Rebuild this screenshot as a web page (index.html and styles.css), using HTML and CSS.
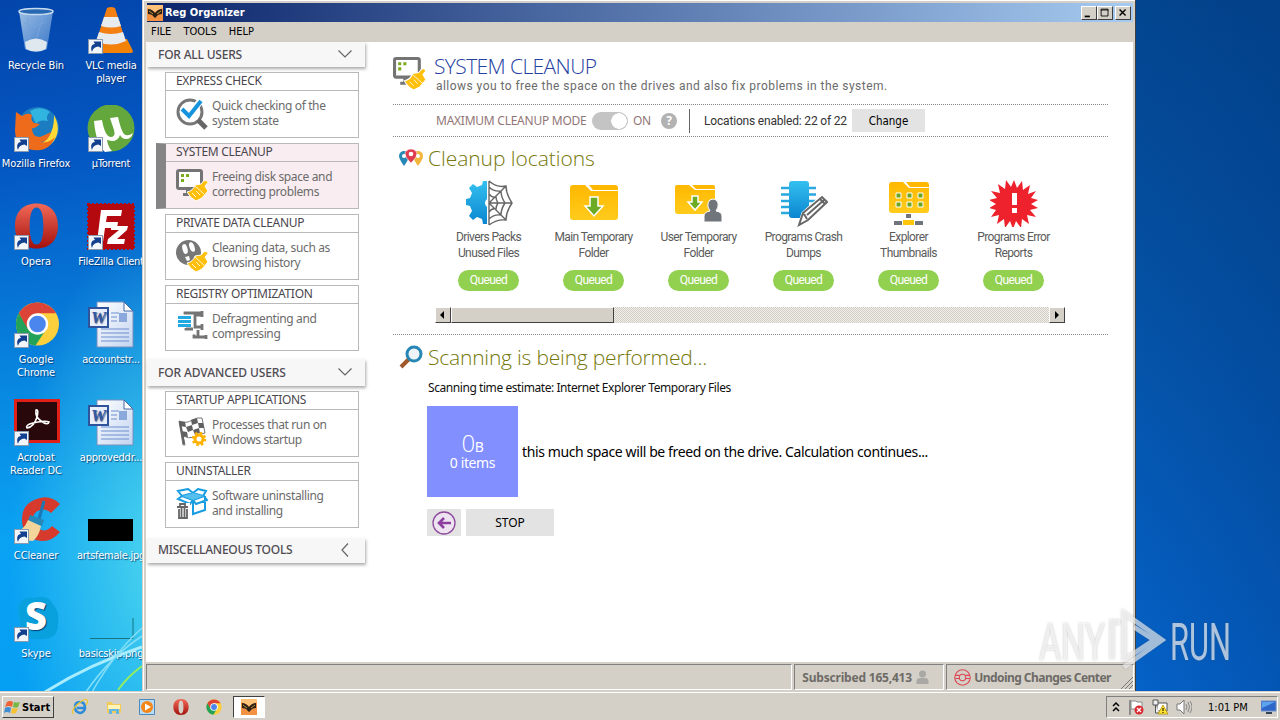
FILE: index.html
```html
<!DOCTYPE html>
<html>
<head>
    <meta charset="utf-8">
    <title>Reg Organizer</title>
    <link rel="stylesheet" href="styles.css">
</head>
<body>
    <svg class="defs" width="0" height="0">
        <defs>
            <linearGradient id="blue" x1="0" y1="0" x2="0" y2="1"><stop offset="0" stop-color="#35c0f0"/><stop offset="1" stop-color="#0a86d0"/></linearGradient>
            <linearGradient id="gold" x1="0" y1="0" x2="0" y2="1"><stop offset="0" stop-color="#ffb800"/><stop offset="1" stop-color="#ffcb1c"/></linearGradient>
            <linearGradient id="opera" x1="0" y1="0" x2="0" y2="1"><stop offset="0" stop-color="#f26a58"/><stop offset="1" stop-color="#a3100c"/></linearGradient>
            <linearGradient id="glass" x1="0" y1="0" x2="1" y2="1"><stop offset="0" stop-color="#b9d4ee" stop-opacity=".85"/><stop offset="1" stop-color="#4c86cf" stop-opacity=".75"/></linearGradient>
            <linearGradient id="doc" x1="0" y1="0" x2="1" y2="1"><stop offset="0" stop-color="#fff"/><stop offset="1" stop-color="#c3d4f0"/></linearGradient>
        </defs>
        <symbol id="shortcut" viewBox="0 0 15 15"><rect x=".5" y=".5" width="14" height="14" fill="#f2f6fb" stroke="#8a9bb0"/><path d="M4 13C2 8 4 5 7 5L5.500 2.500H13V9L10.500 7.500C7 8 5 9 4 13Z" fill="#123f8e"/></symbol>
        <symbol id="monitor" viewBox="0 0 32 32"><rect x="1.500" y="1.500" width="24" height="18" rx="1.500" fill="#fff" stroke="#747474" stroke-width="3"/><path d="M10 20h8v4h3v3H7v-3h3z" fill="#747474"/><path d="M5 5h3v3H5zM10 5h3v3h-3zM5 10h3v3H5z" fill="#7cab1d"/><use href="#broom"/></symbol>
        <symbol id="broom" viewBox="0 0 32 32"><path d="M25 15l2.500-3q3-2 4.500 1.500L29 17l3 5-6 7-6 3q-6-3-9-9 6-1 8-7z" fill="#ffbf0b" stroke="#fff" stroke-width="1"/><path d="M19 17l9 8M16 24l4 4M20 22l4 4" stroke="#fff" stroke-width=".8"/></symbol>
        <symbol id="chrome" viewBox="0 0 46 46"><circle cx="23" cy="23" r="22" fill="#fccf3c"/><path d="M4 12A22 22 0 0 0 21 45L32 28 23 23 14 28z" fill="#23a35a"/><path d="M23 12h19a22 22 0 0 0-38 0l9 16z" fill="#db4437"/><circle cx="23" cy="23" r="11" fill="#fff"/><circle cx="23" cy="23" r="8.500" fill="#4a86ee"/></symbol>
        <symbol id="operaO" viewBox="0 0 46 46"><path fill-rule="evenodd" d="M23 0C9 0 1 9 1 23s8 23 22 23 22-9 22-23S37 0 23 0zm0 4c5 0 7 8 7 19s-2 19-7 19-7-8-7-19 2-19 7-19z" fill="url(#opera)"/></symbol>
        <symbol id="word" viewBox="0 0 48 48"><path d="M10 1h27l9 9v36H10z" fill="url(#doc)" stroke="#7790bd"/><path d="M37 1v9h9z" fill="#fff" stroke="#4667a5"/><path d="M24 12h8M24 16h6M24 20h6M14 28h28M14 32h28M14 36h28M14 40h28" stroke="#6d8fd0"/><rect x="32" y="12" width="8" height="9" fill="#8ba8dc"/><rect x="2" y="7" width="19" height="19" fill="#e9effa" stroke="#2f549c" stroke-width="2"/><text x="11.500" y="22" text-anchor="middle" font-family="Liberation Serif, serif" font-size="17" font-style="italic" font-weight="bold" fill="#3158a5">W</text></symbol>
        <symbol id="reg" viewBox="0 0 16 16"><rect width="16" height="16" fill="#f39243"/><path d="M0 0h16v3L8 7 0 3z" fill="#ffc278"/><path d="M1 4q4 0 7 4 3-4 7-4v5q-2 0-4 1l-3 3-3-3Q3 9 1 9z" fill="#282017"/><path d="M2 6l4 3M14 6l-4 3" stroke="#c49338"/></symbol>
        <symbol id="down" viewBox="0 0 16 10"><path d="M1.500 1.500L8 8l6.500-6.500" fill="none" stroke="#666" stroke-width="1.200"/></symbol>
    </svg>

    <div class="desktop">
        <div class="icons">
            <div class="icon">
                <svg viewBox="0 0 48 48"><path d="M7 4h34l-6 38q-11 6-22 0z" fill="url(#glass)"/><ellipse cx="24" cy="4.500" rx="17" ry="3" fill="#2867b2" stroke="#c7dbef" stroke-width="1.500"/><path d="M13 35q11-7 22 0l-1 7q-10 5-20 0z" fill="#dfe8ee"/><path d="M15 10l3 23M31 10l-6 20M12 16l10 4 12-5" stroke="#76a5dc" fill="none"/></svg>
                <span>Recycle Bin</span>
            </div>
            <div class="icon">
                <svg viewBox="0 0 48 48"><path d="M8 32h32l6 12q0 2-2 2H4q-2 0-2-2z" fill="#f28308"/><path d="M20 1q4-2 8 0l11 34q-15 9-30 0z" fill="#f47f12"/><path d="M17 10h14l3 9q-10 3-20 0zM12 25q12 4 24 0l3 9q-15 7-30 0z" fill="#e9ecef"/></svg>
                <svg class="shortcut"><use href="#shortcut"/></svg>
                <span>VLC media<br>player</span>
            </div>
            <div class="icon">
                <svg viewBox="0 0 48 48"><circle cx="26" cy="23" r="21" fill="#1b7cc2"/><path d="M18 6q10-6 20 1-5 4-2 9-9-2-12 3z" fill="#32b4e0"/><path d="M42 10q9 17-3 29-9 8-21 5 25-7 24-34z" fill="#ffd936"/><path d="M4 7l6 4q6-4 10-1-2 5 2 8l6 1q-5 5-8 4 0 9 8 9 5-2 11-5-3 10-11 10 9 2 15-5-6 15-21 13Q3 43 3 25z" fill="#ee6b1b"/></svg>
                <svg class="shortcut"><use href="#shortcut"/></svg>
                <span>Mozilla Firefox</span>
            </div>
            <div class="icon">
                <svg viewBox="0 0 48 48"><circle cx="24" cy="23" r="23.500" fill="#64a83d"/><path d="M7 16l8-1q3 17 9 17 5 0 3-7l-4-12 8-1q4 18 8 18 3 1 7-2-2 6-7 6-4 0-6-4-2 6-8 6l-5-1q1 7 5 11l-7 1Q9 39 7 16z" fill="#fff"/></svg>
                <svg class="shortcut"><use href="#shortcut"/></svg>
                <span>µTorrent</span>
            </div>
            <div class="icon">
                <svg viewBox="0 0 48 48"><use href="#operaO" x="2" width="45" height="46"/></svg>
                <svg class="shortcut"><use href="#shortcut"/></svg>
                <span>Opera</span>
            </div>
            <div class="icon">
                <svg viewBox="0 0 48 48"><rect x="1" y="1" width="46" height="45" fill="#b4090f" stroke="#b4090f" stroke-width="2" stroke-dasharray="2 2"/><path d="M14 7h21l-1 6H20l-1 6h12l-1 6H18l-2 14h-6z" fill="#fff"/><path d="M24 23h17l-1 4-10 9h8l-1 5H20l1-5 11-9h-8z" fill="#fff"/></svg>
                <svg class="shortcut"><use href="#shortcut"/></svg>
                <span>FileZilla Client</span>
            </div>
            <div class="icon">
                <svg viewBox="0 0 48 48"><use href="#chrome" x="3" width="45" height="46"/></svg>
                <svg class="shortcut"><use href="#shortcut"/></svg>
                <span>Google<br>Chrome</span>
            </div>
            <div class="icon">
                <svg><use href="#word"/></svg>
                <span>accountstr...</span>
            </div>
            <div class="icon">
                <svg viewBox="0 0 48 48"><rect x="3.500" y="1.500" width="43" height="41" fill="#28080a" stroke="#e02018" stroke-width="3"/><path d="M24 11q3-1 1 7-3 10-10 11-2-3 6-5 12-3 16-1-1 4-8-1-6-4-5-11z" fill="none" stroke="#fff" stroke-width="1.600"/></svg>
                <svg class="shortcut"><use href="#shortcut"/></svg>
                <span>Acrobat<br>Reader DC</span>
            </div>
            <div class="icon">
                <svg><use href="#word"/></svg>
                <span>approveddr...</span>
            </div>
            <div class="icon">
                <svg viewBox="0 0 48 48"><path d="M48 7Q37-4 22 3 9 9 10 24t14 19q14 4 24-8l-8-6q-6 7-13 3-6-3-6-10t7-9q6-2 11 3z" fill="#d63a2c"/><path d="M32 4l-5 18" stroke="#1d77b5" stroke-width="3"/><path d="M18 18l14 5-2 6-14-5z" fill="#2687b9"/><path d="M16 23l13 6q-2 10-8 15Q9 44 3 36q9-3 13-13z" fill="#f3d49a"/></svg>
                <svg class="shortcut"><use href="#shortcut"/></svg>
                <span>CCleaner</span>
            </div>
            <div class="icon">
                <svg viewBox="0 0 48 48"><rect x="1" y="22" width="45" height="22"/></svg>
                <span>artsfemale.jpg</span>
            </div>
            <div class="icon">
                <svg viewBox="0 0 48 48"><path d="M6 14Q8 1 23 3q12-4 17 5 8 8 6 20 0 17-16 16Q15 46 9 35z" fill="#08a0dd"/><text x="24" y="35" text-anchor="middle" font-family="Open Sans, sans-serif" font-size="38" font-weight="800" fill="#fff">S</text></svg>
                <svg class="shortcut"><use href="#shortcut"/></svg>
                <span>Skype</span>
            </div>
            <div class="icon">
                <svg viewBox="0 0 48 48"><path d="M3 43.500h43V23" fill="none" stroke="#15747f"/></svg>
                <span>basicskip.png</span>
            </div>
        </div>
        <svg class="rays" viewBox="0 0 142 160"><path d="M45 160Q90 132 142 115" fill="none" stroke="#a8ecff" stroke-width="3"/><path d="M86 160Q110 125 142 104M92 160Q115 120 142 96" fill="none" stroke="#83def6" stroke-width="1.500"/><path d="M118 158Q127 145 142 134" fill="none" stroke="#92ec62" stroke-width="2"/></svg>
    </div>

    <div class="window">
        <div class="titlebar">
            <svg class="app-icon"><use href="#reg"/></svg>
            <b>Reg Organizer</b>
            <div class="controls">
                <svg viewBox="0 0 16 14"><path d="M3 10h6v2H3z"/></svg>
                <svg viewBox="0 0 16 14"><path d="M3.500 2.500h8v8h-8zM3 3.500h9" fill="none" stroke="#000"/></svg>
                <svg class="close" viewBox="0 0 16 14"><path d="M4 3l7 7M11 3l-7 7" stroke="#000" stroke-width="1.600"/></svg>
            </div>
        </div>
        <div class="menu"><span>FILE</span><span>TOOLS</span><span>HELP</span></div>

        <div class="content">
            <div class="sidebar">
                <div class="group first">FOR ALL USERS<svg><use href="#down"/></svg></div>
                <div class="cards">
                    <div class="card">
                        <h3>EXPRESS CHECK</h3>
                        <div class="card-body">
                            <svg viewBox="0 0 32 32"><circle cx="14" cy="14" r="12" fill="#fff" stroke="#777" stroke-width="3"/><path d="M22 22l8 8" stroke="#666" stroke-width="5"/><path d="M6 11l7 7L25 2" fill="none" stroke="#fff" stroke-width="7"/><path d="M6 11l7 7L25 3" fill="none" stroke="#1593dd" stroke-width="4"/></svg>
                            <p>Quick checking of the<br>system state</p>
                        </div>
                    </div>
                    <div class="card active">
                        <h3>SYSTEM CLEANUP</h3>
                        <div class="card-body">
                            <svg><use href="#monitor"/></svg>
                            <p>Freeing disk space and<br>correcting problems</p>
                        </div>
                    </div>
                    <div class="card">
                        <h3>PRIVATE DATA CLEANUP</h3>
                        <div class="card-body">
                            <svg viewBox="0 0 32 32"><circle cx="12.500" cy="12.500" r="12.500" fill="#777"/><ellipse cx="9" cy="9" rx="2.500" ry="5" fill="#fff" transform="rotate(-15 9 9)"/><ellipse cx="16" cy="7" rx="2.500" ry="5" fill="#fff" transform="rotate(-20 16 7)"/><path d="M9 17l4-1 1 4-3 1z" fill="#fff"/><use href="#broom"/></svg>
                            <p>Cleaning data, such as<br>browsing history</p>
                        </div>
                    </div>
                    <div class="card">
                        <h3>REGISTRY OPTIMIZATION</h3>
                        <div class="card-body">
                            <svg viewBox="0 0 32 32"><path d="M9 3.500V2h17M26 0v6M26 4h-7v12h7M26 13v6M10 17v1h7M22 19v7M17 26h14M18 23.500v4M30 24v4" fill="none" stroke="#747474" stroke-width="2.800"/><path d="M2 5h13v3H2zM2 9h13v3H2zM2 13h13v3H2z" fill="#21a9e3"/></svg>
                            <p>Defragmenting and<br>compressing</p>
                        </div>
                    </div>
                </div>
                <div class="group">FOR ADVANCED USERS<svg><use href="#down"/></svg></div>
                <div class="cards advanced">
                    <div class="card">
                        <h3>STARTUP APPLICATIONS</h3>
                        <div class="card-body">
                            <svg viewBox="0 0 32 32"><path d="M3 4q8 3 13-1 6-3 10-2l3 15q-7 1-10 4-7 2-12-1l2 9H7z" fill="#fff" stroke="#777"/><path d="M3 4l6 1 1 5-6-1zM15 3l6-2 1 5-6 2zM10 10l6-2 1 5-5 2zM22 6l5 0 1 5-5 0zM5 14l6 1 1 5-6-1zM17 13l6-2 1 5-5 2z" fill="#606060"/><path d="M4 5l4 22" stroke="#606060" stroke-width="2"/><circle cx="23" cy="22" r="5.500" fill="#fff"/><circle cx="23" cy="22" r="4" fill="#fff" stroke="#ffb300" stroke-width="3"/><circle cx="23" cy="22" r="6" fill="none" stroke="#ffb300" stroke-width="2.500" stroke-dasharray="2.400 2.312"/></svg>
                            <p>Processes that run on<br>Windows startup</p>
                        </div>
                    </div>
                    <div class="card">
                        <h3>UNINSTALLER</h3>
                        <div class="card-body">
                            <svg viewBox="0 0 32 32"><path d="M6 8l11 4v14l12-4V8M17 12L6 8 2 11l12 5 3-4 3 4 11-4-3-4-11 4M6 8L2 3l10-2 5 4 5-4 8 2-3 5-10-3z" fill="#fff" stroke="#189de0" stroke-width="2"/><path d="M6 8l11-3 11 3-11 4z" fill="#55bff0"/><path d="M0 15h14v15H0z" fill="#fff"/><path d="M1 19h11M4 18v-2h5v2M3 21v9h8v-9M5.500 20v9M8.500 20v9" fill="none" stroke="#666" stroke-width="1.800"/></svg>
                            <p>Software uninstalling<br>and installing</p>
                        </div>
                    </div>
                </div>
                <div class="group misc">MISCELLANEOUS TOOLS<svg viewBox="0 0 10 16"><path d="M8 1.500L2 8l6 6.500" fill="none" stroke="#666" stroke-width="1.200"/></svg></div>
            </div>

            <div class="main">
                <div class="page-head">
                    <svg><use href="#monitor"/></svg>
                    <div>
                        <h1>SYSTEM CLEANUP</h1>
                        <p>allows you to free the space on the drives and also fix problems in the system.</p>
                    </div>
                </div>
                <div class="mode">
                    <span class="mode-label">MAXIMUM CLEANUP MODE</span>
                    <span class="toggle"></span>
                    <span class="mode-on">ON</span>
                    <span class="help">?</span>
                    <span class="enabled">Locations enabled: 22 of 22</span>
                    <span class="button change">Change</span>
                </div>
                <div class="locations">
                    <h2>
                        <svg viewBox="0 0 24 18"><path d="M5 17Q0 10 0 7a5 5 0 0 1 10 0q0 3-5 10z" fill="#2588b5"/><path d="M19 17q-5-7-5-10a5 5 0 0 1 10 0q0 3-5 10z" fill="#f0b63c"/><path d="M12 14Q6 8 6 5a6 5 0 0 1 12 0q0 3-6 9z" fill="#df3c50" stroke="#fff" stroke-width=".6"/><circle cx="5" cy="7" r="2" fill="#fff"/><circle cx="12" cy="5" r="2.300" fill="#fff"/><circle cx="19" cy="7" r="2" fill="#fff"/></svg>
                        Cleanup locations
                    </h2>
                    <div class="tiles">
                        <div class="tile">
                            <svg viewBox="0 0 48 48"><path d="M22 2v18a5 5 0 0 0 0 8v17h-4l-1-5-5-2-4 3-4-4 3-5-2-5-4-1v-6l4-1 2-5-3-5 4-4 4 3 5-2 1-4z" fill="url(#blue)"/><path d="M24 2v44M24 24h23M24 24L41 7M24 24l17 17M24 2q8 7 17 5 0 8 6 17-6 9-6 17-9-1-17 5M24 8q5 5 12 4 0 6 4 12-4 6-4 12-7-1-12 4M24 15q3 4 7 3 0 3 2 6-2 3-2 6-4-1-7 3" fill="none" stroke="#666" stroke-width="1.400"/></svg>
                            <p>Drivers Packs<br>Unused Files</p><span class="pill">Queued</span>
                        </div>
                        <div class="tile">
                            <svg viewBox="0 0 48 48"><path d="M0 9q0-3 3-3h12l6 6h27v26q0 3-3 3H3q-3 0-3-3z" fill="url(#gold)"/><path d="M19 6h26q3 0 3 3v2H23z" fill="#ffb800"/><path d="M20 18h8v9h5l-9 10-9-10h5z" fill="#6eab25" stroke="#fff" stroke-width="1.500"/></svg>
                            <p>Main Temporary<br>Folder</p><span class="pill">Queued</span>
                        </div>
                        <div class="tile">
                            <svg viewBox="0 0 48 48"><path d="M0 8q0-2 2-2h12l6 5h20v21q0 3-3 3H3q-3 0-3-3z" fill="url(#gold)"/><path d="M17 6h21q2 0 2 2v2H21z" fill="#ffb800"/><path d="M17 17h6v6h4l-7 8-7-8h4z" fill="#6eab25" stroke="#fff" stroke-width="1.500"/><path d="M29 43v-6q0-4 6-5-3-4-2-8 1-4 5-4t5 4q1 4-2 8 6 1 6 5v6z" fill="#70747b" stroke="#fff"/></svg>
                            <p>User Temporary<br>Folder</p><span class="pill">Queued</span>
                        </div>
                        <div class="tile">
                            <svg viewBox="0 0 48 48"><path d="M1 9h35M1 15.500h35M1 22h35M1 28h35M1 34h30" stroke="#29a8df" stroke-width="2.500"/><rect x="9" y="2" width="20" height="37" rx="3" fill="url(#blue)"/><path d="M19 46l4-12 19-17 6 5-19 19z" fill="#fff" stroke="#fff" stroke-width="3"/><path d="M19 46l4-12 19-16 5 5-19 18zM24 35l3 5M27 36l17-15M40 20l5 5" fill="none" stroke="#666" stroke-width="2"/></svg>
                            <p>Programs Crash<br>Dumps</p><span class="pill">Queued</span>
                        </div>
                        <div class="tile">
                            <svg viewBox="0 0 48 48"><path d="M4 6q0-3 3-3h11l6 6h20v22q0 3-3 3H7q-3 0-3-3z" fill="url(#gold)"/><path d="M21 3h20q3 0 3 3v2H25z" fill="#ffb800"/><path d="M11 14h5v5h-5zM22 14h5v5h-5zM33 14h5v5h-5zM11 23h5v5h-5zM22 23h5v5h-5zM33 23h5v5h-5z" fill="#6ba51f" stroke="#fff"/><path d="M21 35h5v4h-5zM9 42h8v4H9zM30 42h8v4h-8z" fill="#70747b"/><path d="M18 41h11v5H18z" fill="#ffc60c"/></svg>
                            <p>Explorer<br>Thumbnails</p><span class="pill">Queued</span>
                        </div>
                        <div class="tile">
                            <svg viewBox="0 0 48 48"><path d="M24 1l3 8 5-7 1 9 7-5-2 9 8-3-5 7 7 2-7 4 7 4-8 2 6 7-9-2 2 9-7-5-1 9-5-7-3 8-3-8-5 7-1-9-7 5 2-9-8 2 5-7-7-2 7-4-7-4 8-2-6-7 9 2-2-9 7 5 1-9 5 7z" fill="#ee222d"/><path d="M22 14h5v12h-5zM22 29h5v5h-5z" fill="#fff"/></svg>
                            <p>Programs Error<br>Reports</p><span class="pill">Queued</span>
                        </div>
                    </div>
                    <div class="scrollbar">
                        <i class="arrow"><svg viewBox="0 0 14 14"><path d="M8 3v8L4 7z"/></svg></i>
                        <i class="thumb"></i>
                        <i class="arrow right"><svg viewBox="0 0 14 14"><path d="M5 3v8l4-4z"/></svg></i>
                    </div>
                </div>
                <div class="scan">
                    <h2>
                        <svg viewBox="0 0 24 24"><path d="M2 22l8-8" stroke="#a0582d" stroke-width="4"/><circle cx="15" cy="9" r="7" fill="#eef4f8" stroke="#2786b4" stroke-width="3"/></svg>
                        Scanning is being performed...
                    </h2>
                    <p class="estimate">Scanning time estimate: Internet Explorer Temporary Files</p>
                    <div class="result">
                        <div class="total"><div class="size"><big>0</big>B</div><div>0 items</div></div>
                        <p>this much space will be freed on the drive. Calculation continues...</p>
                    </div>
                    <div class="actions">
                        <span class="button back"><svg viewBox="0 0 24 24"><circle cx="12" cy="12" r="11" fill="#eee4f1" stroke="#8d4a9c" stroke-width="1.300"/><path d="M19 12H7M12 7l-5 5 5 5" fill="none" stroke="#8d3fa0" stroke-width="2.600"/></svg></span>
                        <span class="button stop">STOP</span>
                    </div>
                </div>
            </div>
        </div>

        <div class="status">
            <div class="pane"></div>
            <div class="pane subscribed">Subscribed 165,413 <svg viewBox="0 0 12 14"><circle cx="6" cy="4" r="3.500"/><path d="M0 14v-3q0-3 4-3h4q4 0 4 3v3z"/></svg></div>
            <div class="pane undo"><svg viewBox="0 0 16 16"><circle cx="8" cy="8" r="7.300"/><circle cx="8" cy="8" r="3"/><path d="M1 6h4M1 9h4M11 6h4M11 9h4"/></svg> Undoing Changes Center<svg class="grip" viewBox="0 0 12 12"><path d="M0 12L12 0M4 12l8-8M8 12l4-4"/></svg></div>
        </div>
    </div>

    <svg class="watermark" viewBox="0 0 200 70">
        <text x="1" y="55" textLength="66" lengthAdjust="spacingAndGlyphs">ANY</text>
        <text x="132" y="55" textLength="61" lengthAdjust="spacingAndGlyphs">RUN</text>
        <path d="M74 54V17h8M86 56V8l38 27-38 27M96 22l20 13-30 20"/>
    </svg>

    <div class="taskbar">
        <div class="start"><svg viewBox="0 0 16 16"><path d="M3 3q3-2 6 0L8 8Q5 6 1 8z" fill="#ef6234"/><path d="M10 3q3 1 6 0l-2 5q-3 1-5 0z" fill="#75b844"/><path d="M1 9q3-2 6 0l-1 5q-3-2-6 0z" fill="#408ed3"/><path d="M8 9q3 1 6 0l-2 5q-3 1-5 0z" fill="#f6c232"/></svg>Start</div>
        <div class="quick">
            <svg viewBox="0 0 16 16"><path d="M13 10q-2 4-5 4-5-1-5-6t5-5 5 6H5" fill="none" stroke="#2d8bda" stroke-width="2.500"/><path d="M1 15Q-1 11 6 5t9-4q2 1-1 5" fill="none" stroke="#edc631" stroke-width="1.300"/></svg>
            <svg viewBox="0 0 16 16"><path d="M1 3h5l1 2h8v9H1z" fill="#f0cb58"/><path d="M2 6h12v4H2z" fill="#fff3b7"/><path d="M3 15v-5h10v5h-3v-3H6v3z" fill="#66b5df"/></svg>
            <svg viewBox="0 0 16 16"><path d="M.5.5h15v15H.5z" fill="#b9dbf4" stroke="#4989bf"/><circle cx="8" cy="8" r="6" fill="#f48617"/><path d="M6 4.500v7L12 8z" fill="#fff"/></svg>
            <svg><use href="#operaO"/></svg>
            <svg><use href="#chrome"/></svg>
        </div>
        <div class="task"><svg><use href="#reg"/></svg></div>
        <div class="tray">
            <svg class="chev" viewBox="0 0 8 12"><path d="M1 5l3-3 3 3M1 10l3-3 3 3" fill="none" stroke="#000" stroke-width="1.500"/></svg>
            <svg viewBox="0 0 16 16"><path d="M2 1v15" stroke="#777" stroke-width="1.500"/><path d="M3 2h5l1 1h5v7H3z" fill="#fff" stroke="#888"/><circle cx="11" cy="11" r="4.500" fill="#dc2830"/><path d="M9 9l4 4M13 9l-4 4" stroke="#fff" stroke-width="1.300"/></svg>
            <svg viewBox="0 0 16 16"><path d="M5 4h10v8H5z" fill="#fff" stroke="#555"/><path d="M1 1h5v5H1zM3.500 6v8h4" fill="#eee" stroke="#555"/><path d="M11 6l5 9H6z" fill="#ffe22e" stroke="#a98a00" stroke-width=".7"/><path d="M11 9v3M11 13v1" stroke="#000"/></svg>
            <svg viewBox="0 0 16 16"><path d="M1 5h3l4-4v14l-4-4H1z" fill="#fff" stroke="#777"/><path d="M10 5q2 3 0 6M12 3q3 5 0 10M14 2q4 6 0 12" fill="none" stroke="#888"/></svg>
            <span>1:01 PM</span>
            <svg viewBox="0 0 16 16"><path d="M0 2h15v10H0z" fill="#2d66c8" stroke="#6e8fc9"/><path d="M1 3h13L1 9z" fill="#5ca2ec"/><path d="M5 13h6v2H5z" fill="#345"/></svg>
        </div>
    </div>
</body>
</html>
```

FILE: styles.css
```css
* {
    box-sizing: border-box;
}

body {
    margin: 0;
    width: 1280px;
    height: 720px;
    overflow: hidden;
    position: relative;
    font-family: 'DejaVu Sans Condensed', 'DejaVu Sans', sans-serif;
    font-size: 11px;
    color: #000;
    background: #0050b0;
}

h1, h2, h3, p {
    margin: 0;
    font-weight: normal;
}

svg {
    flex: none;
}

.defs {
    position: absolute;
}

/* desktop */
.desktop {
    height: 692px;
    background: linear-gradient(to right, transparent 1135px, rgba(0, 50, 120, .25)), linear-gradient(to bottom, #03458f 0, #0450a2 40%, #0562c8 100%);
}

.icons {
    display: grid;
    grid-template-columns: 72px 76px;
    grid-auto-rows: 98px;
    width: 142px;
    height: 692px;
    padding-top: 7px;
    overflow: hidden;
    background: radial-gradient(ellipse 150px 330px at 160px 560px, rgba(110, 240, 235, .65), transparent), linear-gradient(172deg, #0345ab 0, #0458c4 24%, #0785df 53%, #0aa2f3 76%, #049ef3 100%);
}

.icon {
    position: relative;
    display: flex;
    flex-direction: column;
    align-items: center;
    color: #fff;
    line-height: 13px;
    letter-spacing: -0.1px;
    text-align: center;
    white-space: nowrap;
    text-shadow: 1px 1px 1px rgba(0, 30, 80, .7);
}

.icon svg {
    width: 48px;
    height: 48px;
    margin-bottom: 4px;
}

.icon:nth-child(even) {
    padding-left: 2px;
    letter-spacing: -0.25px;
}

.icon .shortcut {
    position: absolute;
    left: 14px;
    top: 32px;
    width: 15px;
    height: 15px;
}

.icon:nth-child(even) .shortcut {
    left: 16px;
}

.rays {
    position: absolute;
    left: 0;
    top: 532px;
    width: 142px;
    height: 160px;
}

/* window */
.window {
    position: absolute;
    left: 142px;
    top: 0;
    width: 994px;
    height: 692px;
    padding: 3px 2px 1px 4px;
    background: #d4d0c8;
    border-left: 1px solid #d4d0c8;
    border-right: 1px solid #404040;
    box-shadow: inset 1px 1px #fff;
}

.titlebar {
    display: flex;
    align-items: center;
    height: 19px;
    color: #fff;
    background: linear-gradient(to right, #0a246a, #a6caf0);
}

.titlebar b {
    margin-left: 2px;
}

.app-icon {
    width: 16px;
    height: 16px;
}

.controls {
    display: flex;
    margin-left: auto;
    padding-right: 2px;
}

.controls svg,
.scrollbar .arrow,
.thumb {
    background: #d4d0c8;
    border: 1px solid;
    border-color: #fff #404040 #404040 #fff;
}

.controls svg {
    width: 16px;
    height: 14px;
}

.controls .close {
    margin-left: 2px;
}

.menu {
    display: flex;
    gap: 12px;
    height: 20px;
    padding-left: 4px;
    line-height: 20px;
}

.content {
    display: flex;
    width: 987px;
    height: 620px;
    margin-left: -1px;
    padding-left: 1px;
    background: #fff;
}

/* sidebar */
.sidebar {
    width: 218px;
    font-family: 'Noto Sans', sans-serif;
    font-size: 12px;
}

.group {
    display: flex;
    align-items: center;
    justify-content: space-between;
    height: 27px;
    margin-top: 8px;
    padding: 0 12px 1px 11px;
    color: #504b53;
    font-weight: 500;
    letter-spacing: -0.1px;
    background: #f7f7f7;
    box-shadow: 1px 2px 3px #aaa;
}

.group.first {
    height: 25px;
    margin-top: 0;
    letter-spacing: -0.2px;
}

.group svg {
    width: 16px;
    height: 10px;
}

.group.misc {
    height: 25px;
    margin-top: 10px;
    padding-bottom: 2px;
    letter-spacing: -0.25px;
}

.group.misc svg {
    width: 10px;
    height: 16px;
    margin-right: 3px;
}

.cards {
    display: flex;
    flex-direction: column;
    gap: 5px;
    padding: 5px 6px 0 18px;
}

.card {
    height: 66px;
    border: 1px solid #b9b9b9;
}

.card.active {
    margin-left: -9px;
    background: #f9edf1;
    border-left: 10px solid #858585;
}

.card h3 {
    height: 18px;
    padding-left: 10px;
    color: #4a464d;
    font-size: 12px;
    line-height: 16px;
    letter-spacing: -0.3px;
    border-bottom: 1px solid #b9b9b9;
}

.card-body {
    display: flex;
    gap: 4px;
    padding: 7px 0 0 10px;
    color: #6b6b6b;
    line-height: 15px;
    letter-spacing: -0.37px;
}

.card-body svg {
    width: 32px;
    height: 32px;
}

.card-body p {
    white-space: nowrap;
}

/* main panel */
.main {
    width: 743px;
    padding: 14px 0 0 28px;
    font-family: 'Noto Sans', sans-serif;
    font-size: 12px;
}

.page-head {
    display: flex;
    gap: 8px;
    height: 48px;
    padding-top: 1px;
}

.page-head svg {
    width: 33px;
    height: 33px;
}

.page-head h1 {
    margin-top: -5px;
    color: #2440a0;
    font: 300 21px/28px 'Open Sans', sans-serif;
    letter-spacing: -0.6px;
}

.page-head p {
    margin: -2px 0 0 2px;
    color: #6b6b6b;
    font: 12px/16px Roboto, sans-serif;
    letter-spacing: 0.46px;
    white-space: nowrap;
}

.mode {
    display: flex;
    align-items: center;
    height: 33px;
    padding-left: 43px;
    border-top: 1px dotted #888;
    border-bottom: 1px dotted #888;
    white-space: nowrap;
}

.mode-label,
.mode-on {
    color: #917676;
    letter-spacing: -0.25px;
}

.mode-label {
    width: 156px;
}

.toggle {
    width: 36px;
    height: 18px;
    margin-right: 5px;
    border-radius: 9px;
    background: radial-gradient(circle at 27px 9px, #fff 7.500px, #c4c4c4 8px);
}

.mode-on {
    width: 18px;
}

.help {
    width: 16px;
    height: 16px;
    margin-left: 10px;
    border-radius: 8px;
    background: #b2b2b2;
    color: #fff;
    font-weight: bold;
    line-height: 16px;
    text-align: center;
}

.enabled {
    width: 163px;
    height: 24px;
    margin-left: 12px;
    padding-left: 14px;
    border-left: 1px solid #666;
    color: #333;
    font: 12px/25px Roboto, sans-serif;
    letter-spacing: -0.18px;
}

.button {
    display: flex;
    align-items: center;
    justify-content: center;
    background: #e3e3e3;
}

.change {
    width: 73px;
    height: 23px;
    font-family: 'DejaVu Sans Condensed', 'DejaVu Sans', sans-serif;
    font-size: 11.500px;
}

.main h2 {
    display: flex;
    align-items: center;
    gap: 5px;
    color: #75780a;
    font: 300 21px/30px 'Open Sans', sans-serif;
    letter-spacing: -0.05px;
}

.locations {
    height: 198px;
    padding: 6px 0 0 6px;
    border-bottom: 1px dotted #888;
}

.locations h2 svg {
    width: 24px;
    height: 18px;
}

.tiles {
    display: flex;
    padding: 6px 0 0 37px;
}

.tile {
    display: flex;
    flex-direction: column;
    align-items: center;
    width: 105px;
    height: 128px;
    color: #5b5b5b;
    font: 12px/16px Roboto, sans-serif;
    letter-spacing: -0.6px;
    text-align: center;
}

.tile svg {
    width: 48px;
    height: 48px;
    margin-bottom: 2px;
}

.pill {
    width: 61px;
    margin-top: 9px;
    border-radius: 11px;
    background: #92d050;
    color: #fff;
    line-height: 21px;
}

.scrollbar {
    display: flex;
    width: 630px;
    height: 16px;
    margin-left: 36px;
    background: repeating-conic-gradient(#f4f2ee 0 25%, #cfcbc3 0 50%) 0 0 / 2px 2px;
}

.arrow {
    display: flex;
    width: 16px;
    height: 16px;
}

.arrow svg {
    width: 14px;
    height: 14px;
}

.arrow.right {
    margin-left: auto;
}

.thumb {
    width: 163px;
}

.scan {
    padding: 7px 0 0 6px;
}

.scan h2 {
    letter-spacing: -0.2px;
}

.scan h2 svg {
    width: 24px;
    height: 24px;
}

.estimate {
    margin: 7px 0 9px 29px;
    color: #111;
    line-height: 18px;
    letter-spacing: -0.43px;
}

.result {
    display: flex;
    align-items: center;
    gap: 4px;
    padding-left: 28px;
    font-size: 14px;
    letter-spacing: -0.39px;
    white-space: nowrap;
}

.total {
    width: 91px;
    height: 91px;
    padding-top: 22px;
    background: #828fff;
    color: #fff;
    text-align: center;
    line-height: 12px;
}

.size {
    height: 29px;
}

.total big {
    font: 300 24px/29px 'Open Sans', sans-serif;
}

.actions {
    display: flex;
    gap: 5px;
    padding: 12px 0 0 28px;
}

.actions .button {
    height: 27px;
}

.back {
    width: 34px;
}

.back svg {
    width: 24px;
    height: 24px;
}

.stop {
    width: 88px;
}

/* status bar */
.status {
    display: flex;
    gap: 2px;
    width: 988px;
    height: 28px;
    margin-left: -1px;
    padding-top: 2px;
}

.pane {
    display: flex;
    align-items: center;
    width: 647px;
    border: 1px solid;
    border-color: #808080 #fff #fff #808080;
    color: #6e6b67;
    font: bold 12px 'Noto Sans', sans-serif;
    white-space: nowrap;
}

.subscribed {
    width: 150px;
    padding-left: 7px;
    letter-spacing: -0.2px;
}

.subscribed svg {
    width: 13px;
    height: 14px;
    margin-left: 4px;
    fill: #aaa8a4;
}

.undo {
    position: relative;
    width: 188px;
    padding-left: 7px;
    letter-spacing: -0.55px;
}

.undo svg {
    width: 17px;
    height: 17px;
    margin-right: 3px;
    fill: none;
    stroke: #db4650;
}

.undo .grip {
    position: absolute;
    right: 0;
    bottom: 0;
    width: 12px;
    height: 12px;
    margin: 0;
    stroke: #777;
}

.watermark {
    position: absolute;
    left: 1038px;
    top: 605px;
    width: 200px;
    height: 70px;
    fill: rgba(255, 255, 255, .65);
    filter: drop-shadow(0 0 1px rgba(80, 80, 80, .5));
}

.watermark text {
    font: 400 51px Roboto, sans-serif;
}

.watermark path {
    fill: none;
    stroke: rgba(255, 255, 255, .6);
    stroke-width: 5;
}

/* taskbar */
.taskbar {
    position: relative;
    display: flex;
    align-items: center;
    height: 28px;
    padding: 1px 2px 0;
    background: #d4d0c8;
    border-top: 1px solid #fff;
    box-shadow: 0 -1px #d4d0c8;
}

.start {
    display: flex;
    align-items: center;
    gap: 2px;
    width: 52px;
    height: 22px;
    padding-left: 1px;
    font-weight: bold;
    border: 1px solid;
    border-color: #fff #404040 #404040 #fff;
}

.start svg,
.quick svg,
.task svg,
.tray svg {
    width: 16px;
    height: 16px;
}

.quick {
    display: flex;
    gap: 17.500px;
    margin-left: 18px;
}

.task {
    display: flex;
    align-items: center;
    justify-content: center;
    width: 32px;
    height: 22px;
    margin-left: 11px;
    background: #fff;
    border: 1px solid;
    border-color: #404040 #fff #fff #404040;
}

.tray {
    display: flex;
    align-items: center;
    gap: 8px;
    width: 172px;
    height: 22px;
    margin-left: auto;
    padding-left: 5px;
    border: 1px solid;
    border-color: #808080 #fff #fff #808080;
}

.tray .chev {
    width: 8px;
    height: 12px;
}

.tray span {
    width: 43px;
    margin: 0 2px 0 8px;
    white-space: nowrap;
}
```
